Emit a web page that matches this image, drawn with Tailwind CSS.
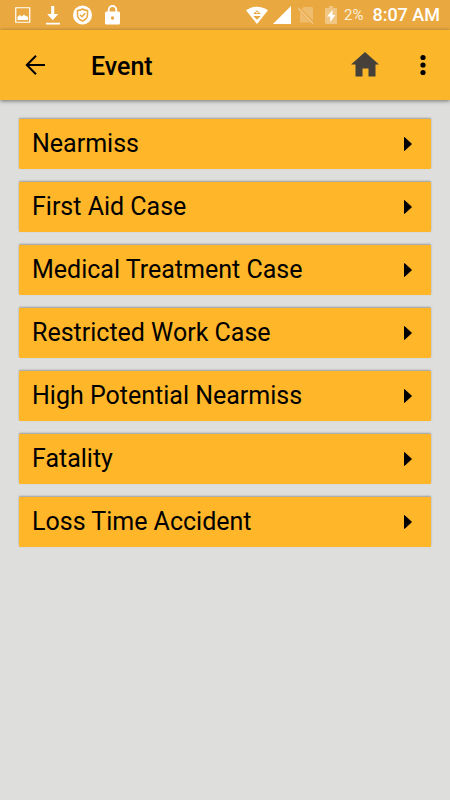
<!DOCTYPE html>
<html lang="en">
<head>
    <meta charset="UTF-8">
    <meta name="viewport" content="width=device-width, initial-scale=1.0">
    <title>Event</title>
    <script src="https://cdn.jsdelivr.net/npm/@tailwindcss/browser@4"></script>
</head>
<body class="min-h-screen bg-[#dededd] font-[Roboto,sans-serif] text-black">

    <!-- Status bar -->
    <div class="flex h-[30px] items-center justify-between bg-[#e9a840] pl-[15px] pr-[10px] text-white">
        <div class="flex items-center gap-[13px]">
            <svg class="h-4 w-4" viewBox="0 0 16 16" fill="none">
                <path d="M.75.75h14v14.500h-14z" stroke="currentColor" stroke-width="1.200"/>
                <path d="M2.500 13V10l2.200-2 2 1.500L9 7.500l2 2 1-.7 1 1.700V13z" fill="currentColor"/>
            </svg>
            <svg class="h-5 w-4" viewBox="0 0 16 20" fill="currentColor">
                <path d="M7.200 1h3v8h4L8.700 15.200 3.200 9h4zM2 17.800h14v1.700H2z"/>
            </svg>
            <svg class="-mx-px h-5 w-5" viewBox="0 0 20 20">
                <circle cx="10.500" cy="10" r="9.500" fill="#fff"/>
                <path d="M10.500 4c1.600 1 3.300 1.500 5 1.500v4.500c0 2.800-2 4.700-5 6-3-1.300-5-3.200-5-6V5.500c1.700 0 3.400-.5 5-1.500z" fill="none" stroke="#e9a840" stroke-width="1.500"/>
                <path d="M8 9.700l2 2 3.300-3.500" fill="none" stroke="#e9a840" stroke-width="1.500"/>
            </svg>
            <svg class="h-5 w-4" viewBox="0 0 16 20">
                <path d="M4.700 8V4.800a3.800 3.800 0 0 1 7.600 0V8" fill="none" stroke="#fff" stroke-width="1.800"/>
                <rect x="1" y="6.500" width="15" height="13" rx="1.500" fill="#fff"/>
                <circle cx="8.500" cy="13" r="1.700" fill="#e9a840"/>
            </svg>
        </div>
        <div class="flex items-center">
            <svg class="h-[18px] w-[22px]" viewBox="0 0 22 18">
                <path d="M0 4.300C6.500-.6 15.500-.6 22 4.300L11 18z" fill="#fff"/>
                <path d="M7.200 8 11 4.200 14.800 8zM7.200 10h7.600L11 13.800z" fill="#e9a840"/>
                <path d="M9.500 7 11 5.500 12.500 7z" fill="#fff"/>
            </svg>
            <svg class="ml-[5px] h-[18px] w-[18px]" viewBox="0 0 18 18" fill="currentColor">
                <path d="M18 0v18H0z"/>
            </svg>
            <svg class="ml-[7px] h-[18px] w-4" viewBox="0 0 16 18">
                <path d="M5.500 1H14a1 1 0 0 1 1 1v14.500H2V5z" fill="#efbb6c"/>
                <path d="M0 1.500 15.500 17.500" stroke="#e9a840" stroke-width="3"/>
                <path d="M0 2 15 17.500" stroke="#f3ca8d" stroke-width="1.400"/>
            </svg>
            <svg class="ml-[11px] h-[18px] w-3" viewBox="0 0 12 18">
                <path d="M4 0h4v2h3a1 1 0 0 1 1 1v14a1 1 0 0 1-1 1H1a1 1 0 0 1-1-1V3a1 1 0 0 1 1-1h3z" fill="#f1c582"/>
                <path d="M7.500 4 2 10.500H5.200V16L10.500 9H7.500z" fill="#fff"/>
            </svg>
            <span class="ml-[7px] text-[15px] leading-5 text-[#fceedb]">2%</span>
            <span class="ml-[9px] text-lg leading-5 font-medium">8:07 AM</span>
        </div>
    </div>

    <!-- App bar -->
    <header class="flex h-[70px] items-center bg-[#fbb62a] pl-[24px] pr-[21px] shadow-[0_1px_4px_rgba(0,0,0,0.5)]">
        <button type="button" aria-label="Back">
            <svg class="h-6 w-6" viewBox="0 0 24 24" fill="none" stroke="currentColor" stroke-width="2">
                <path d="M12 2.800 2.800 12l9.200 9.200M2.500 12H21"/>
            </svg>
        </button>
        <h1 class="ml-[43px] flex-1 pt-[3px] text-[25px] leading-8 font-medium">Event</h1>
        <button type="button" aria-label="Home" class="text-[#45413a]">
            <svg class="h-7 w-[30px]" viewBox="0 0 30 28" fill="currentColor">
                <path d="M15 1 29 13.500h-3.500v12h-7V17.500h-6v8h-7v-12H1z"/>
            </svg>
        </button>
        <button type="button" aria-label="More options" class="ml-[37px]">
            <svg class="h-6 w-3" viewBox="0 0 12 24" fill="currentColor">
                <circle cx="6" cy="4.500" r="2.600"/>
                <circle cx="6" cy="12" r="2.600"/>
                <circle cx="6" cy="19.500" r="2.600"/>
            </svg>
        </button>
    </header>

    <!-- Event types -->
    <main class="flex flex-col gap-[13px] px-[19px] pt-[19px] pb-5">
        <button type="button" class="flex h-[50px] items-center justify-between rounded-[1px] bg-[#ffb629] pl-[13px] pr-[18px] text-left text-[25px] leading-8 shadow-[0_-1px_2px_rgba(0,0,0,0.3)]">
            Nearmiss
            <svg class="h-4 w-[10px]" viewBox="0 0 10 16" fill="currentColor" stroke="currentColor" stroke-linejoin="round"><path d="M1.500 1.500 8.500 8l-7 6.500z"/></svg>
        </button>
        <button type="button" class="flex h-[50px] items-center justify-between rounded-[1px] bg-[#ffb629] pl-[13px] pr-[18px] text-left text-[25px] leading-8 shadow-[0_-1px_2px_rgba(0,0,0,0.3)]">
            First Aid Case
            <svg class="h-4 w-[10px]" viewBox="0 0 10 16" fill="currentColor" stroke="currentColor" stroke-linejoin="round"><path d="M1.500 1.500 8.500 8l-7 6.500z"/></svg>
        </button>
        <button type="button" class="flex h-[50px] items-center justify-between rounded-[1px] bg-[#ffb629] pl-[13px] pr-[18px] text-left text-[25px] leading-8 shadow-[0_-1px_2px_rgba(0,0,0,0.3)]">
            Medical Treatment Case
            <svg class="h-4 w-[10px]" viewBox="0 0 10 16" fill="currentColor" stroke="currentColor" stroke-linejoin="round"><path d="M1.500 1.500 8.500 8l-7 6.500z"/></svg>
        </button>
        <button type="button" class="flex h-[50px] items-center justify-between rounded-[1px] bg-[#ffb629] pl-[13px] pr-[18px] text-left text-[25px] leading-8 shadow-[0_-1px_2px_rgba(0,0,0,0.3)]">
            Restricted Work Case
            <svg class="h-4 w-[10px]" viewBox="0 0 10 16" fill="currentColor" stroke="currentColor" stroke-linejoin="round"><path d="M1.500 1.500 8.500 8l-7 6.500z"/></svg>
        </button>
        <button type="button" class="flex h-[50px] items-center justify-between rounded-[1px] bg-[#ffb629] pl-[13px] pr-[18px] text-left text-[25px] leading-8 shadow-[0_-1px_2px_rgba(0,0,0,0.3)]">
            High Potential Nearmiss
            <svg class="h-4 w-[10px]" viewBox="0 0 10 16" fill="currentColor" stroke="currentColor" stroke-linejoin="round"><path d="M1.500 1.500 8.500 8l-7 6.500z"/></svg>
        </button>
        <button type="button" class="flex h-[50px] items-center justify-between rounded-[1px] bg-[#ffb629] pl-[13px] pr-[18px] text-left text-[25px] leading-8 shadow-[0_-1px_2px_rgba(0,0,0,0.3)]">
            Fatality
            <svg class="h-4 w-[10px]" viewBox="0 0 10 16" fill="currentColor" stroke="currentColor" stroke-linejoin="round"><path d="M1.500 1.500 8.500 8l-7 6.500z"/></svg>
        </button>
        <button type="button" class="flex h-[50px] items-center justify-between rounded-[1px] bg-[#ffb629] pl-[13px] pr-[18px] text-left text-[25px] leading-8 shadow-[0_-1px_2px_rgba(0,0,0,0.3)]">
            Loss Time Accident
            <svg class="h-4 w-[10px]" viewBox="0 0 10 16" fill="currentColor" stroke="currentColor" stroke-linejoin="round"><path d="M1.500 1.500 8.500 8l-7 6.500z"/></svg>
        </button>
    </main>

</body>
</html>
